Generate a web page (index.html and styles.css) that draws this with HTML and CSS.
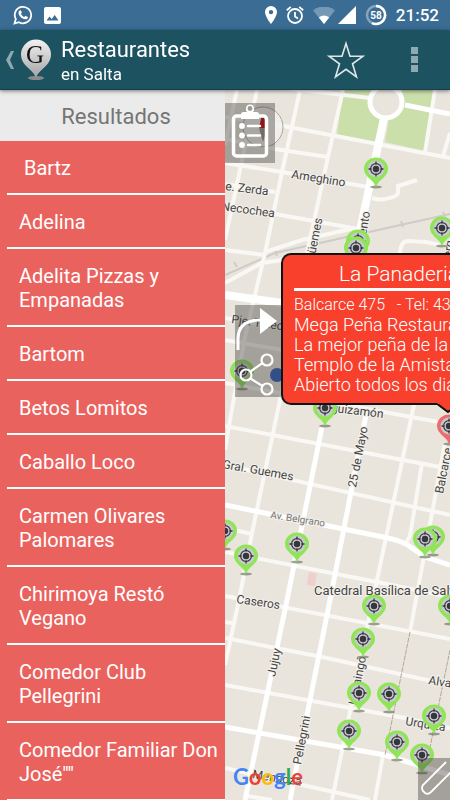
FILE: index.html
```html
<!DOCTYPE html>
<html lang="es">
<head>
    <meta charset="UTF-8">
    <meta name="viewport" content="width=device-width, initial-scale=1.0">
    <link rel="stylesheet" href="styles.css">
    <title>Restaurantes en Salta</title>
</head>
<body>

<div class="status-bar">
    <div class="status-group">
        <svg width="20" height="20" viewBox="0 0 20 20">
            <path d="M1.5 18.5L2.8 14A8.2 8.2 0 1 1 6 17.2Z" fill="none" stroke="#fff" stroke-width="1.8"/>
            <path d="M6.6 5.4l1.2-.2 1.1 2.5-.9 1.2c.8 1.5 1.7 2.4 3.2 3.1l1.2-1.2 2.5 1.2c.2 1.6-1.2 2.4-2.5 2.3C8.6 13.9 5.7 10.6 5.5 7.9c0-1.2.5-2 1.1-2.5z" fill="#fff"/>
        </svg>
        <svg width="17" height="17" viewBox="0 0 17 17">
            <rect width="17" height="17" rx="2" fill="#fff"/>
            <path d="M2.5 13.500l3-4 2.200 2.600 3-4 3.800 5.400z" fill="#3a6c94"/>
        </svg>
    </div>
    <div class="status-group status-right">
        <svg width="12" height="18" viewBox="0 0 12 18">
            <path d="M6 0a6 6 0 0 0-6 6c0 4.500 6 12 6 12s6-7.500 6-12a6 6 0 0 0-6-6zm0 8.300a2.200 2.200 0 1 1 0-4.400 2.200 2.200 0 0 1 0 4.400z" fill="#fff" fill-rule="evenodd"/>
        </svg>
        <svg width="18" height="18" viewBox="0 0 18 18" fill="none" stroke="#fff" stroke-width="1.8">
            <circle cx="9" cy="10" r="7"/>
            <path d="M9 6v4.400l3 2M.8 4.200L4.800.9M17.200 4.200l-4-3.300"/>
        </svg>
        <svg width="22" height="17" viewBox="0 0 22 17">
            <path d="M0 3.500a17 17 0 0 1 22 0L11 17z" fill="#7598b4"/>
            <path d="M5.800 10.600a8.500 8.500 0 0 1 10.400 0L11 17z" fill="#fff"/>
        </svg>
        <svg width="18" height="18" viewBox="0 0 18 18"><path d="M18 0v18H0z" fill="#fff"/></svg>
        <svg class="battery" width="22" height="22" viewBox="0 0 22 22">
            <circle cx="11" cy="11" r="9" fill="none" stroke="#86a5bd" stroke-width="2.5"/>
            <path d="M11 2a9 9 0 1 1-4 17" fill="none" stroke="#fff" stroke-width="2.5"/>
            <text x="11" y="14.5" text-anchor="middle">58</text>
        </svg>
        <span class="clock">21:52</span>
    </div>
</div>

<header class="app-bar">
    <button class="up-button" aria-label="Volver">
        <svg width="10" height="20" viewBox="0 0 10 20"><path d="M6 1h3L5 10l4 9H6L1 10z" fill="#8ea9b0"/></svg>
        <svg width="32" height="42" viewBox="0 0 32 42">
            <defs>
                <linearGradient id="logo-pin" x1="0" y1="0" x2="0" y2="1">
                    <stop offset="0" stop-color="#f2f2f2"/>
                    <stop offset="1" stop-color="#a3a3a3"/>
                </linearGradient>
            </defs>
            <ellipse cx="16" cy="39" rx="8" ry="2" fill="#8b8b8b"/>
            <path d="M16 39C14 31 1 27 1 15.500a15 15 0 0 1 30 0C31 27 18 31 16 39z" fill="url(#logo-pin)"/>
            <text class="logo-letter" x="15" y="24" text-anchor="middle">G</text>
        </svg>
    </button>
    <div class="titles">
        <h1>Restaurantes</h1>
        <p>en Salta</p>
    </div>
    <button class="bar-button" aria-label="Favoritos">
        <svg width="38" height="40" viewBox="0 0 38 40">
            <path d="M19 3.500l4 12.700h13L25.500 23.800 29.500 37 19 29.300 8.500 37l4-13.200L2 16.200h13z" fill="none" stroke="#dfe7e9" stroke-width="1.6"/>
        </svg>
    </button>
    <button class="bar-button more" aria-label="Más opciones">
        <svg width="8" height="28" viewBox="0 0 8 28" fill="#8ea9b0">
            <rect y="1" width="7" height="7"/><rect y="10" width="7" height="7"/><rect y="19" width="7" height="7"/>
        </svg>
    </button>
</header>

<main class="content">
    <nav class="drawer">
        <h2>Resultados</h2>
        <ul>
            <li><a href="#">&nbsp;Bartz</a></li>
            <li><a href="#">Adelina</a></li>
            <li><a href="#">Adelita Pizzas y Empanadas</a></li>
            <li><a href="#">Bartom</a></li>
            <li><a href="#">Betos Lomitos</a></li>
            <li><a href="#">Caballo Loco</a></li>
            <li><a href="#">Carmen Olivares Palomares</a></li>
            <li><a href="#">Chirimoya Restó Vegano</a></li>
            <li><a href="#">Comedor Club Pellegrini</a></li>
            <li><a href="#">Comedor Familiar Don José""</a></li>
        </ul>
    </nav>

    <section class="map">
        <svg class="map-canvas" viewBox="0 0 225 710" preserveAspectRatio="xMinYMin slice">
            <defs>
                <g id="target">
                    <circle r="8.5" fill="#c9cacc"/>
                    <circle r="5.4" fill="none" stroke="#34353d" stroke-width="1.2"/>
                    <circle r="3.2" fill="#34353d"/>
                    <path d="M0-7.500v3M0 7.500v-3M-7.500 0h3M7.500 0h-3" stroke="#34353d" stroke-width="1.3"/>
                </g>
                <g id="pin">
                    <ellipse cy="18" rx="6" ry="1.5" fill="#6f7a66" opacity=".7"/>
                    <path d="M0 18C-2 11-12 8-12 0a12 11.500 0 0 1 24 0C12 8 2 11 0 18z" fill="#8fe556"/>
                    <use href="#target"/>
                </g>
                <g id="pin-selected">
                    <ellipse cy="18" rx="6" ry="1.5" fill="#6f7a66" opacity=".7"/>
                    <path d="M0 18C-2 11-12 8-12 0a12 11.500 0 0 1 24 0C12 8 2 11 0 18z" fill="#ee6a6c"/>
                    <use href="#target"/>
                </g>
            </defs>

            <path class="park" d="M118 0H147L146 14l3 10 8 6-6 22-39-8zM177 0h32l-9 61-40-9 4-24 12-9z"/>
            <rect class="block" x="84" y="482" width="8" height="13" transform="rotate(10 84 482)"/>

            <!-- railway -->
            <path class="rail" d="M0 185L50 163 225 124M12 177l-3-5M52 166l-2-6M178 137l-2-6M220 127l-2-5"/>

            <!-- minor streets -->
            <g class="street">
                <path d="M12 0L0 55M32 0L0 150M75 0L57 82 40 163 20 247 5 330 0 360M118 0L103 67 82 163 55 310 27 443 14 510 0 575"/>
                <path d="M210 0L200 62M225 43l-7 23"/>
                <path d="M60-2L145 8M0 27L43 33 225 68M0 49L50 59 103 67M0 73L57 82 143 97M0 94L50 102M0 116L50 124 133 139"/>
                <path d="M0 160L40 165M130 138L77 150 40 162M0 193L37 173 57 170"/>
                <path d="M147 108q9 3 17 0 9-2 9-5v-7l19-6M175 165q0-14 8-14l18 1 24 5"/>
                <path d="M0 228L225 270M0 250L57 260M0 293L225 334M0 336L220 378M0 375L225 425M0 438L27 444"/>
                <path d="M0 462L152 492 225 507M0 506L225 549M0 532l7 1M0 548L97 567 225 595M0 595L180 628 225 638M0 678L145 710"/>
                <path d="M190 310L152 490 143 533 107 710M197 373l-11 67q-1 8-5 12M220 353L202 450 185 542M158 665l-8 45M22 706l25 4"/>
            </g>

            <!-- avenues -->
            <g class="avenue">
                <path d="M180 15L225 24M97 337L62 510 20 710M142 320L105 510 65 710"/>
                <path d="M0 415L163 448q10 2 18 6l19 13 25 8M0 637L160 665 225 685"/>
            </g>
            <path class="avenue wide" d="M159 28L133 150M0 205L57 213"/>
            <path class="footpath" d="M185 542L160 665M225 560L203 667"/>
            <circle class="roundabout" cx="161" cy="12" r="16"/>

            <g class="label">
                <text transform="translate(66 88) rotate(9)">Ameghino</text>
                <text transform="translate(0 100) rotate(7)">e. Zerda</text>
                <text transform="translate(-4 120) rotate(8)">Necochea</text>
                <text transform="translate(89 172) rotate(-79)">Güemes</text>
                <text transform="translate(145 122) rotate(-81)" text-anchor="end">Sarmiento</text>
                <text transform="translate(226 168) rotate(-80)">erq</text>
                <text transform="translate(6 233) rotate(8)">Pje. Tineo</text>
                <text transform="translate(158 328) rotate(7)" text-anchor="end">Leguizamón</text>
                <text transform="translate(131 398) rotate(-79)">25 de Mayo</text>
                <text transform="translate(218 404) rotate(-79)">Balcarce</text>
                <text transform="translate(-3 378) rotate(10)">Gral. Guemes</text>
                <text class="small" transform="translate(45 428) rotate(9)">Av. Belgrano</text>
                <text class="place" x="89" y="505">Catedral Basílica de Salta</text>
                <text transform="translate(11 513) rotate(8)">Caseros</text>
                <text transform="translate(50 587) rotate(-78)">Jujuy</text>
                <text transform="translate(76 675) rotate(-79)">Pellegrini</text>
                <text transform="translate(141 567) rotate(-79)" text-anchor="end">Ituzaingó</text>
                <text transform="translate(203 594) rotate(9)">Alvarado</text>
                <text transform="translate(180 635) rotate(9)">Urquiza</text>
                <text transform="translate(27 688) rotate(9)">Mendoza</text>
            </g>

            <use href="#pin" x="151" y="79"/>
            <use href="#pin" x="133" y="151"/>
            <use href="#pin" x="131" y="158"/>
            <use href="#pin" x="217" y="138"/>
            <use href="#pin" x="17" y="281"/>
            <use href="#pin" x="100" y="318"/>
            <use href="#pin-selected" x="224" y="336"/>
            <use href="#pin" x="0" y="441"/>
            <use href="#pin" x="21" y="466"/>
            <use href="#pin" x="72" y="454"/>
            <use href="#pin" x="208" y="447"/>
            <use href="#pin" x="200" y="449"/>
            <use href="#pin" x="149" y="516"/>
            <use href="#pin" x="225" y="516"/>
            <use href="#pin" x="138" y="549"/>
            <use href="#pin" x="134" y="603"/>
            <use href="#pin" x="164" y="604"/>
            <use href="#pin" x="209" y="626"/>
            <use href="#pin" x="124" y="641"/>
            <use href="#pin" x="172" y="652"/>
            <use href="#pin" x="197" y="665"/>

            <!-- compass -->
            <circle cx="38" cy="37" r="20" fill="#f3f1ed" fill-opacity=".85" stroke="#aaa8a4"/>
            <path d="M34 38l3-14 5 10v5z" fill="#c30000"/>
            <path d="M34 38l8 1-4 13z" fill="#8f8f8f"/>
            <circle cx="52" cy="285" r="7" fill="#2c60bd"/>

            <text class="google" x="8" y="695"><tspan fill="#4285f4">G</tspan><tspan fill="#ea4335">o</tspan><tspan fill="#fbbc05">o</tspan><tspan fill="#4285f4">g</tspan><tspan fill="#34a853">l</tspan><tspan fill="#ea4335">e</tspan></text>
        </svg>

        <button class="map-button list-button" aria-label="Lista">
            <svg width="50" height="60" viewBox="0 0 50 60" fill="none" stroke="#fff">
                <rect x="8.5" y="13" width="33" height="40" rx="3" stroke-width="3.5"/>
                <path d="M16 16v-5q0-2 3-2h3a4 4 0 1 1 6 0h3q3 0 3 2v5z" fill="#fff" stroke="none"/>
                <circle cx="25" cy="5.5" r="3.2" stroke-width="1.5" fill="#9c9994"/>
                <path d="M23 23h12M23 32.500h12M23 42h12" stroke-width="2.5" stroke-linecap="round"/>
                <g fill="#fff" stroke="none"><circle cx="17" cy="23" r="2.9"/><circle cx="17" cy="32.5" r="2.9"/><circle cx="17" cy="42" r="2.9"/></g>
            </svg>
        </button>

        <div class="map-actions">
            <button aria-label="Cómo llegar">
                <svg width="46" height="46" viewBox="0 0 46 46">
                    <path d="M3 45V34q0-18 20-19h4" fill="none" stroke="#fff" stroke-width="3"/>
                    <path d="M25 3l17 13-17 13z" fill="#fff"/>
                </svg>
            </button>
            <button aria-label="Compartir">
                <svg width="46" height="46" viewBox="0 0 46 46" fill="none" stroke="#fff" stroke-width="2.2">
                    <circle cx="32" cy="9" r="5.5"/><circle cx="11" cy="24" r="5.5"/><circle cx="32" cy="38" r="5.5"/>
                    <path d="M15.500 20.500L27.500 12M15.500 27.500l12 7.500"/>
                </svg>
            </button>
        </div>

        <button class="map-button edit-button" aria-label="Editar">
            <svg width="32" height="42" viewBox="0 0 32 42" fill="none" stroke="#fff" stroke-width="1.8">
                <path d="M28 4L5 27q-2 3 0 6l2 2q3 2 6-1L36 11"/>
            </svg>
        </button>

        <article class="info-window">
            <h3>La Panaderia</h3>
            <p class="address">Balcarce 475 &nbsp; - Tel: 43</p>
            <p>Mega Peña Restaurante</p>
            <p>La mejor peña de la ciudad</p>
            <p>Templo de la Amistad</p>
            <p>Abierto todos los dias</p>
            <svg class="arrow" width="24" height="11" viewBox="0 0 24 11">
                <path d="M0 0l12 9L24 0" fill="#f8402c" stroke="#111" stroke-width="2"/>
                <path d="M1 0h22v1H2z" fill="#f8402c"/>
            </svg>
        </article>
    </section>
</main>

</body>
</html>
```
FILE: styles.css
```css
* {
    box-sizing: border-box;
}

body {
    font-family: Roboto, sans-serif;
    margin: 0;
    display: flex;
    flex-direction: column;
    height: 100vh;
    overflow: hidden;
    color: #fff;
}

h1, h2, h3, p, ul {
    margin: 0;
    padding: 0;
    font-weight: inherit;
}

button {
    border: 0;
    padding: 0;
    background: none;
    cursor: pointer;
}

svg {
    display: block;
}

.status-bar {
    flex: none;
    height: 30px;
    padding: 0 11px 0 13px;
    background: #3a6c94;
    display: flex;
    justify-content: space-between;
    align-items: center;
}

.status-group {
    display: flex;
    align-items: center;
    gap: 11px;
}

.status-right {
    gap: 9px;
}

.status-right svg:nth-child(3) {
    margin-right: -6px;
}

.battery text {
    font-size: 10px;
    font-weight: 700;
    fill: #fff;
}

.clock {
    font-size: 17px;
    font-weight: 500;
}

.app-bar {
    flex: none;
    height: 60px;
    padding: 0 12px 0 5px;
    background: #1d5261;
    border-bottom: 1px solid #143f4c;
    box-shadow: 0 1px 4px rgba(0, 0, 0, 0.5);
    display: flex;
    align-items: center;
    position: relative;
    z-index: 3;
}

.up-button {
    display: flex;
    align-items: center;
    gap: 5px;
}

.logo-letter {
    font-family: "Liberation Serif", serif;
    font-size: 25px;
    fill: #111;
}

.titles {
    flex: 1;
    padding: 3px 0 0 9px;
}

.titles h1 {
    font-size: 22px;
    line-height: 26px;
}

.titles p {
    font-size: 17px;
    line-height: 22px;
}

.bar-button {
    width: 60px;
    height: 60px;
    display: flex;
    align-items: center;
    justify-content: center;
}

.bar-button.more {
    width: 46px;
    margin-left: 16px;
}

.content {
    flex: 1;
    min-height: 0;
    display: flex;
}

.drawer {
    width: 50%;
    background: #ea625e;
    overflow-y: auto;
    scrollbar-width: none;
}

.drawer h2 {
    height: 51px;
    padding-left: 7px;
    background: #ebebeb;
    color: #757575;
    font-size: 22px;
    line-height: 53px;
    text-align: center;
}

.drawer ul {
    list-style: none;
    padding-left: 7px;
}

.drawer li {
    border-bottom: 2px solid #fff;
}

.drawer a {
    display: block;
    padding: 15px 0 13px 12px;
    color: #fff;
    font-size: 20px;
    line-height: 24px;
    text-decoration: none;
}

.map {
    width: 50%;
    position: relative;
    overflow: hidden;
    background: #e9e5dd;
}

.map-canvas {
    width: 100%;
    height: 100%;
}

.park {
    fill: #cbdfab;
}

.block {
    fill: #efcfcd;
}

.rail {
    fill: none;
    stroke: #cfccc7;
    stroke-width: 2;
}

.street {
    fill: none;
    stroke: #f9f8f5;
    stroke-width: 4;
}

.avenue {
    fill: none;
    stroke: #fff;
    stroke-width: 5;
}

.avenue.wide {
    stroke-width: 8;
}

.footpath {
    fill: none;
    stroke: #b3a793;
    stroke-width: 1;
    stroke-dasharray: 5 1;
}

.roundabout {
    fill: #e9e5dd;
    stroke: #fff;
    stroke-width: 5;
}

.label {
    font-size: 12px;
    fill: #444;
    stroke: #f4f1ec;
    stroke-width: 2px;
    paint-order: stroke;
}

.label .small {
    font-size: 10px;
    fill: #777;
}

.label .place {
    font-size: 13px;
}

.google {
    font-family: Lato, sans-serif;
    font-size: 22px;
    font-weight: 700;
}

.map-button, .map-actions {
    position: absolute;
    background: rgba(60, 58, 55, 0.4);
}

.list-button {
    top: 13px;
    left: 0;
}

.map-actions {
    top: 215px;
    left: 10px;
    display: flex;
    flex-direction: column;
}

.edit-button {
    right: 0;
    bottom: 0;
}

.info-window {
    position: absolute;
    top: 163px;
    left: 56px;
    width: 334px;
    padding: 5px 12px 8px 11px;
    background: #f8402c;
    border: 2px solid #111;
    border-radius: 10px;
    font-weight: 300;
    font-size: 18px;
    line-height: 20px;
    white-space: nowrap;
}

.info-window h3 {
    padding-left: 45px;
    margin-bottom: 4px;
    border-bottom: 3px solid #fff;
    font-size: 21px;
    line-height: 28px;
}

.info-window .address {
    font-size: 16px;
}

.arrow {
    position: absolute;
    top: 100%;
    left: 50%;
    transform: translateX(-50%);
}
```
